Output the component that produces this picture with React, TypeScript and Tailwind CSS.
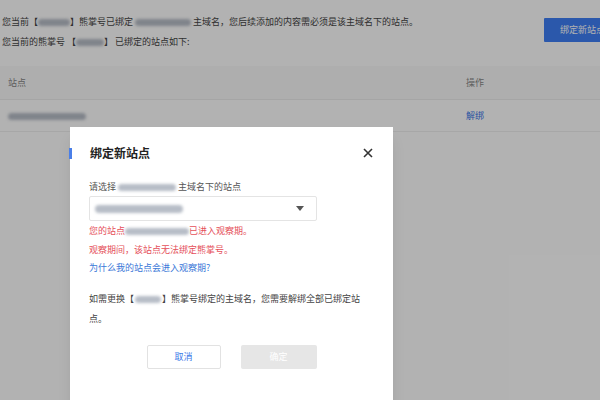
import React from 'react';

const Blur = ({ w, className = '' }: { w: number; className?: string }) => (
  <span
    className={`inline-block align-middle h-[7px] rounded-full blur-[1.5px] bg-gray-400/70 ${className}`}
    style={{ width: w }}
  />
);

export default function App() {
  return (
    <div className="relative w-[600px] h-[400px] overflow-hidden bg-white font-['Noto_Sans_CJK_SC','Noto_Sans',sans-serif] text-[9px] text-[#333]">
      {/* Page */}
      <div className="flex items-start pt-[12px] pl-[2px]">
        <div className="flex-1 leading-[20px] text-[#444]">
          <div>
            您当前【<Blur w={32} />】熊掌号已绑定 <Blur w={56} /> 主域名，您后续添加的内容需必须是该主域名下的站点。
          </div>
          <div>
            您当前的熊掌号 【<Blur w={28} />】 已绑定的站点如下:
          </div>
        </div>
        <button className="shrink-0 mt-[6px] mr-[-21px] w-[77px] h-[24px] bg-[#3e7ef5] text-white text-[9px] rounded-[1px]">
          绑定新站点
        </button>
      </div>

      <div className="mt-[14px]">
        <div className="flex items-center h-[34px] bg-[#fafafa] border-b border-[#ececec] text-[#888]">
          <div className="w-[466px] pl-[8px]">站点</div>
          <div>操作</div>
        </div>
        <div className="flex items-center h-[32px] border-b border-[#f0f0f0]">
          <div className="w-[466px] pl-[8px]">
            <Blur w={78} />
          </div>
          <div className="text-[#3a78e8]">解绑</div>
        </div>
      </div>

      {/* Overlay */}
      <div className="absolute inset-0 bg-black/30" />

      {/* Modal */}
      <div className="absolute left-[70px] top-[127px] w-[323px] h-[300px] bg-white shadow-lg">
        <div className="relative flex items-center h-[50px] mt-[1px] pl-[20px] pr-[20px]">
          <div className="absolute left-[-1px] top-[20px] w-[3px] h-[11px] bg-[#4a7fe8]" />
          <div className="text-[12px] font-bold text-[#222]">绑定新站点</div>
          <button className="ml-auto mr-[0px] text-[#333]">
            <svg width="10" height="10" viewBox="0 0 10 10">
              <path d="M1 1L9 9M9 1L1 9" stroke="#333" strokeWidth="1.6" />
            </svg>
          </button>
        </div>

        <div className="pl-[19px] pr-[20px] pt-[1px]">
          <div className="leading-[16px] text-[#555]">
            请选择 <Blur w={58} className="bg-gray-300" /> 主域名下的站点
          </div>
          <div className="mt-[1px] w-[228px] h-[25px] border border-[#e4e4e4] rounded-[2px] flex items-center pl-[5px] pr-[12px]">
            <Blur w={88} className="h-[8px] bg-gray-300" />
            <svg className="ml-auto" width="8" height="5" viewBox="0 0 8 5">
              <path d="M0 0H8L4 5Z" fill="#555" />
            </svg>
          </div>
          <div className="leading-[19px] text-[#e5505a]">
            <div>
              您的站点<Blur w={64} className="bg-[#f2b3b8]" />已进入观察期。
            </div>
            <div>观察期间，该站点无法绑定熊掌号。</div>
          </div>
          <div className="leading-[17px] text-[#3a78d8]">为什么我的站点会进入观察期?</div>
          <div className="mt-[13px] leading-[20px] text-[#444] pr-[2px]">
            如需更换【<Blur w={26} className="bg-gray-300 mx-[1px]" />】熊掌号绑定的主域名，您需要解绑全部已绑定站点。
          </div>
          <div className="mt-[16px] flex justify-center gap-[20px] pl-[1px]">
            <button className="w-[74px] h-[24px] border border-[#e2e2e2] rounded-[2px] bg-white text-[#3a78e8]">
              取消
            </button>
            <button className="w-[76px] h-[24px] rounded-[2px] bg-[#e6e6e6] text-white">
              确定
            </button>
          </div>
        </div>
      </div>
    </div>
  );
}
